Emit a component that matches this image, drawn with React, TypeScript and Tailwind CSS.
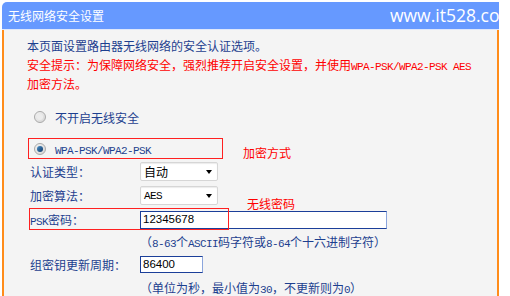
import type { ReactNode } from "react";

const blue = "text-[#1d3f8f]";

function Latin({ children }: { children: ReactNode }) {
  return (
    <span className="font-['Liberation_Mono',monospace] text-[11px] leading-[0] tracking-[-0.6px]">
      {children}
    </span>
  );
}

function Radio({ checked }: { checked?: boolean }) {
  return (
    <span className="flex h-[12px] w-[12px] shrink-0 items-center justify-center rounded-full border border-[#a9a9a9] bg-gradient-to-br from-[#f2f2f2] to-[#d6d6d6]">
      {checked ? (
        <span className="h-[6px] w-[6px] rounded-full bg-gradient-to-br from-[#4a90c8] to-[#123a68]" />
      ) : (
        <span className="h-[6px] w-[6px] rounded-full bg-[#ececec]" />
      )}
    </span>
  );
}

function Select({ value, mono }: { value: string; mono?: boolean }) {
  return (
    <div className="flex h-[19px] w-[78px] items-center justify-between rounded-[2px] border border-[#d6d6d6] bg-white pl-[3px] pr-[5px] leading-[17px] text-black shadow-[inset_0_1px_1px_#ececec]">
      {mono ? <Latin>{value}</Latin> : <span>{value}</span>}
      <span className="h-0 w-0 border-x-[3.5px] border-t-[4px] border-x-transparent border-t-black" />
    </div>
  );
}

function Row({ label, children, className }: { label: ReactNode; children: ReactNode; className: string }) {
  return (
    <div className={`flex h-[19px] items-center ${className}`}>
      <span className={`w-[110px] shrink-0 leading-[19px] ${blue}`}>{label}</span>
      {children}
    </div>
  );
}

export default function App() {
  return (
    <div className="h-[296px] w-[510px] overflow-hidden bg-white pl-[2px] pt-[2px] font-['Noto_Sans_CJK_SC',sans-serif] text-[12px]">
      <div className="w-[497px]">
        <div className="flex h-[27px] items-center overflow-hidden rounded-tl-[5px] bg-[#6699ff] pl-[6px] text-white">
          <span className="w-[382px] shrink-0 leading-none">无线网络安全设置</span>
          <span className="shrink-0 whitespace-nowrap font-['Open_Sans',sans-serif] text-[17.5px] leading-none">
            www.it528.com
          </span>
        </div>
        <div className="h-[1px] bg-[#dfe7fb]" />
        <div className="relative h-[266px] border-x-2 border-[#ff8c1a] bg-[#f4f4f4] pl-[23px] pt-[6px]">
          <p className={`h-[19px] leading-[19px] ${blue}`}>本页面设置路由器无线网络的安全认证选项。</p>
          <p className="leading-[19px] text-[#ff0000]">
            安全提示：为保障网络安全，强烈推荐开启安全设置，并使用<Latin>WPA-PSK/WPA2-PSK AES</Latin>
            <br />
            加密方法。
          </p>

          <div className={`mt-[14px] flex h-[20px] items-center gap-[9px] pl-[7px] leading-[19px] ${blue}`}>
            <Radio />
            <span>不开启无线安全</span>
          </div>

          <div className={`ml-[1px] mt-[11px] flex h-[21px] w-[195px] items-center gap-[9px] border border-[#ff2020] pl-[5px] ${blue}`}>
            <Radio checked />
            <span className="leading-[19px]">
              <Latin>WPA-PSK/WPA2-PSK</Latin>
            </span>
          </div>

          <div className="pl-[3px]">
            <Row label="认证类型：" className="mt-[3px]">
              <Select value="自动" />
            </Row>
            <Row label="加密算法：" className="mt-[5px]">
              <Select value="AES" mono />
            </Row>
            <Row label={<><Latin>PSK</Latin>密码：</>} className="mt-[5px]">
              <div className="flex h-[18px] w-[247px] items-center border border-[#1b3f99] border-r-[#8ba5dc] bg-white pl-[2px] font-['Liberation_Sans',sans-serif] text-[11.5px] text-black">
                12345678
              </div>
            </Row>
            <p className={`ml-[110px] mt-[3px] h-[19px] leading-[19px] ${blue}`}>
              （<Latin>8-63</Latin>个<Latin>ASCII</Latin>码字符或<Latin>8-64</Latin>个十六进制字符）
            </p>
            <Row label="组密钥更新周期：" className="mt-[4px]">
              <div className="flex h-[17px] w-[63px] items-center border border-[#1b3f99] border-r-[#8ba5dc] bg-white pl-[2px] font-['Liberation_Sans',sans-serif] text-[11.5px] text-black">
                86400
              </div>
            </Row>
            <p className={`ml-[110px] mt-[4px] h-[19px] leading-[19px] ${blue}`}>
              （单位为秒，最小值为<Latin>30</Latin>，不更新则为<Latin>0</Latin>）
            </p>
          </div>

          <div className="absolute left-[25px] top-[178px] h-[22px] w-[200px] border border-[#ff2020]" />
          <span className="absolute left-[239px] top-[113px] leading-[19px] text-[#ff0000]">加密方式</span>
          <span className="absolute left-[243px] top-[164px] leading-[19px] text-[#ff0000]">无线密码</span>
        </div>
      </div>
    </div>
  );
}
